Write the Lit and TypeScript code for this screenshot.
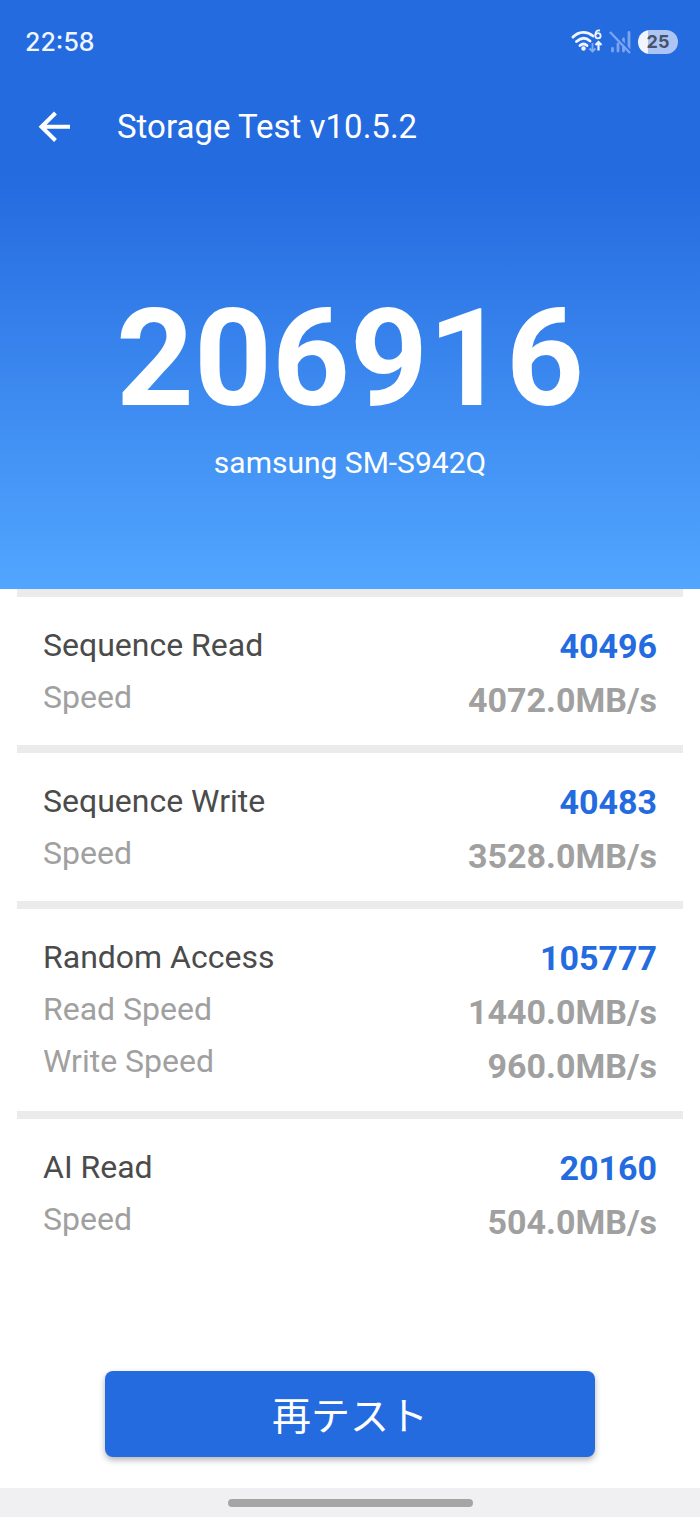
import { LitElement, html, css } from "lit";
import { customElement, property } from "lit/decorators.js";

interface Measure {
  label: string;
  value: string;
}

interface Result {
  title: string;
  score: string;
  measures: Measure[];
}

const RESULTS: Result[] = [
  { title: "Sequence Read", score: "40496", measures: [{ label: "Speed", value: "4072.0MB/s" }] },
  { title: "Sequence Write", score: "40483", measures: [{ label: "Speed", value: "3528.0MB/s" }] },
  {
    title: "Random Access",
    score: "105777",
    measures: [
      { label: "Read Speed", value: "1440.0MB/s" },
      { label: "Write Speed", value: "960.0MB/s" },
    ],
  },
  { title: "AI Read", score: "20160", measures: [{ label: "Speed", value: "504.0MB/s" }] },
];

@customElement("status-bar")
class StatusBar extends LitElement {
  static styles = css`
    :host {
      display: flex;
      align-items: center;
      justify-content: space-between;
      height: 84px;
      padding: 0 22px 0 25px;
      color: #f0f6ff;
      font-family: Inter, "Noto Sans", sans-serif;
    }
    .time {
      font-size: 25px;
      font-weight: 500;
      line-height: 32px;
    }
    .icons {
      display: flex;
      align-items: center;
      gap: 6px;
    }
    .battery {
      width: 40px;
      border-radius: 12px;
      background: linear-gradient(90deg, #f0f5ff 25%, #adc5f3 25%);
      color: #47536b;
      font-size: 18px;
      font-weight: 700;
      line-height: 24px;
      text-align: center;
    }
  `;

  render() {
    return html`
      <span class="time">22:58</span>
      <div class="icons">
        <svg width="32" height="26" viewBox="0 0 32 26" fill="none" aria-label="Wi-Fi 6" role="img">
          <g stroke="#f0f6ff" stroke-width="2.9" stroke-linecap="round">
            <path d="M2 8C8 2 16 2 22 7" />
            <path d="M5.500 12.500C10 8.500 15 8.500 19 12" />
            <path d="M9 16.500c2.500-2.200 4.500-2.200 7 0" />
          </g>
          <circle cx="12.500" cy="19.500" r="2.200" fill="#f0f6ff" />
          <path d="M29 1.500c-3.200-.7-4.700 1.500-4.700 4.800" stroke="#f0f6ff" stroke-width="1.800" />
          <circle cx="27" cy="6.800" r="2.600" stroke="#f0f6ff" stroke-width="1.800" />
          <path d="M21.500 14v8M18.500 19.500l3 3 3-3" stroke="#84acf0" stroke-width="1.800" />
          <path d="M27.500 21.500v-9M24.500 16l3-3 3 3" stroke="#f0f6ff" stroke-width="2.200" />
        </svg>
        <svg width="23" height="26" viewBox="0 0 23 26" fill="none" stroke="#7ba5ee" aria-label="No signal" role="img">
          <path d="M3.500 19.500v2.500M9 15V22M14.500 10v12M20 3.500V22" stroke-width="2.800" stroke-linecap="round" />
          <path d="M3 2.500L23 23.500" stroke="#256be0" stroke-width="2" />
          <path d="M1 3L21 24" stroke-width="2.300" />
        </svg>
        <span class="battery">25</span>
      </div>
    `;
  }
}

@customElement("result-card")
class ResultCard extends LitElement {
  @property({ attribute: false }) result!: Result;

  static styles = css`
    :host {
      display: flex;
      justify-content: space-between;
      margin: 0 17px;
      padding: 22px 26px 18px;
      border-top: 8px solid #ebebeb;
    }
    .column {
      display: flex;
      flex-direction: column;
      color: #a0a0a0;
    }
    .labels {
      font-size: 32px;
      line-height: 52px;
    }
    .values {
      font-size: 34px;
      font-weight: 700;
      line-height: 54px;
      text-align: right;
    }
    .title {
      color: #4b4b4b;
    }
    .score {
      color: #256be0;
    }
  `;

  render() {
    const { title, score, measures } = this.result;
    return html`
      <div class="column labels">
        <span class="title">${title}</span>
        ${measures.map((m) => html`<span>${m.label}</span>`)}
      </div>
      <div class="column values">
        <span class="score">${score}</span>
        ${measures.map((m) => html`<span>${m.value}</span>`)}
      </div>
    `;
  }
}

@customElement("app-root")
class AppRoot extends LitElement {
  static styles = css`
    :host {
      display: flex;
      flex-direction: column;
      min-height: 100vh;
      background: #fff;
      font-family: Roboto, "Noto Sans CJK JP", sans-serif;
    }
    .hero {
      padding-bottom: 106px;
      background: linear-gradient(180deg, #256be0 180px, #52a6ff 100%);
      color: #fff;
      text-align: center;
    }
    .bar {
      display: flex;
      align-items: center;
      gap: 44px;
      height: 86px;
      padding: 0 36px;
    }
    .back {
      display: flex;
      padding: 0;
      border: 0;
      background: none;
      color: inherit;
    }
    .heading {
      margin: 0;
      font-size: 33px;
      font-weight: 400;
      line-height: 40px;
    }
    .total {
      margin: 109px 0 0;
      font-size: 136px;
      font-weight: 700;
      line-height: 160px;
    }
    .device {
      margin: 4px 0 0;
      font-size: 30px;
      line-height: 40px;
    }
    .retest {
      width: 70%;
      margin: 104px auto 31px;
      padding: 14px 0 16px;
      border: 0;
      border-radius: 8px;
      background: #256be0;
      box-shadow: 0 3px 6px rgba(0, 0, 0, 0.3);
      color: #fff;
      font-family: "Noto Sans CJK JP", sans-serif;
      font-size: 39px;
      font-weight: 400;
      line-height: 56px;
    }
    .nav {
      display: flex;
      justify-content: center;
      margin-top: auto;
      padding: 11px 0 10px;
      background: #f0f0f2;
    }
    .handle {
      width: 35%;
      height: 8px;
      border-radius: 4px;
      background: #a5a5a6;
    }
  `;

  render() {
    return html`
      <header class="hero">
        <status-bar></status-bar>
        <div class="bar">
          <button class="back" aria-label="Back">
            <svg width="37" height="36" viewBox="0 0 37 36" fill="none" stroke="currentColor" stroke-width="4">
              <path d="M19.500 4L5.500 17.800L19.500 31.500M5.500 17.800H34" />
            </svg>
          </button>
          <h1 class="heading">Storage Test v10.5.2</h1>
        </div>
        <p class="total">206916</p>
        <p class="device">samsung SM-S942Q</p>
      </header>
      <main>
        ${RESULTS.map((r) => html`<result-card .result=${r}></result-card>`)}
      </main>
      <button class="retest">再テスト</button>
      <footer class="nav"><div class="handle"></div></footer>
    `;
  }
}
